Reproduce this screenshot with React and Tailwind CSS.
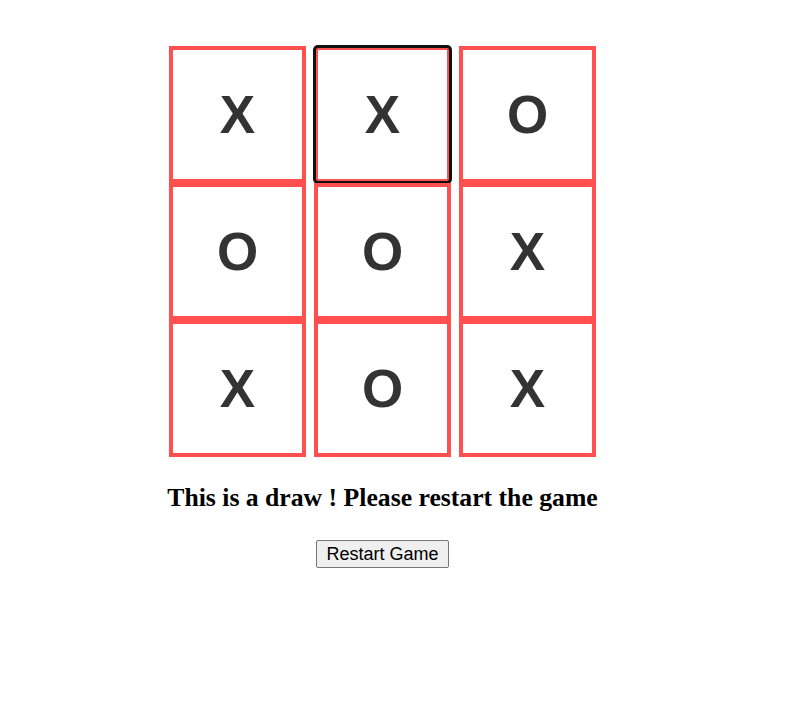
import React, { useState } from "react";

const startBoard = ["X", "X", "O", "O", "O", "X", "X", "O", "X"];

const Square = ({ value, focused, onClick }) => {
    return (
        <button
            onClick={onClick}
            className="relative w-[137px] h-[137px] border-4 border-[#ff4f4f] bg-white flex items-center justify-center text-[53px] font-bold text-[#333333] leading-none [font-family:'Liberation_Sans',Arial,sans-serif] focus:outline-none"
        >
            {value}
            {focused && (
                <span className="absolute -inset-[5px] rounded-[5px] border-[3px] border-[#101010] shadow-[0_0_0_1px_#ffffff] pointer-events-none" />
            )}
        </button>
    );
};

const App = () => {
    const [board, setBoard] = useState(startBoard);
    const [focus, setFocus] = useState(1);

    const rows = [0, 1, 2];

    return (
        <div className="min-h-[719px] w-full bg-white">
            <div className="w-[765px] flex flex-col items-center pt-[46px]">
                <div className="flex flex-col">
                    {rows.map((r) => (
                        <div key={r} className="flex gap-[8px]">
                            {[0, 1, 2].map((c) => {
                                const i = r * 3 + c;
                                return (
                                    <Square
                                        key={i}
                                        value={board[i]}
                                        focused={focus === i}
                                        onClick={() => setFocus(i)}
                                    />
                                );
                            })}
                        </div>
                    ))}
                </div>
                <h2 className="mt-[26px] text-[25.7px] leading-[30px] font-bold text-black [font-family:'Liberation_Serif','Times_New_Roman',serif]">
                    This is a draw ! Please restart the game
                </h2>
                <button
                    onClick={() => setBoard(startBoard)}
                    className="mt-[27px] h-[28px] px-[9px] border border-[#767676] rounded-[2px] bg-[#efefef] text-[18px] leading-none text-black [font-family:'Liberation_Sans',Arial,sans-serif]"
                >
                    Restart Game
                </button>
            </div>
        </div>
    );
};

export default App;
